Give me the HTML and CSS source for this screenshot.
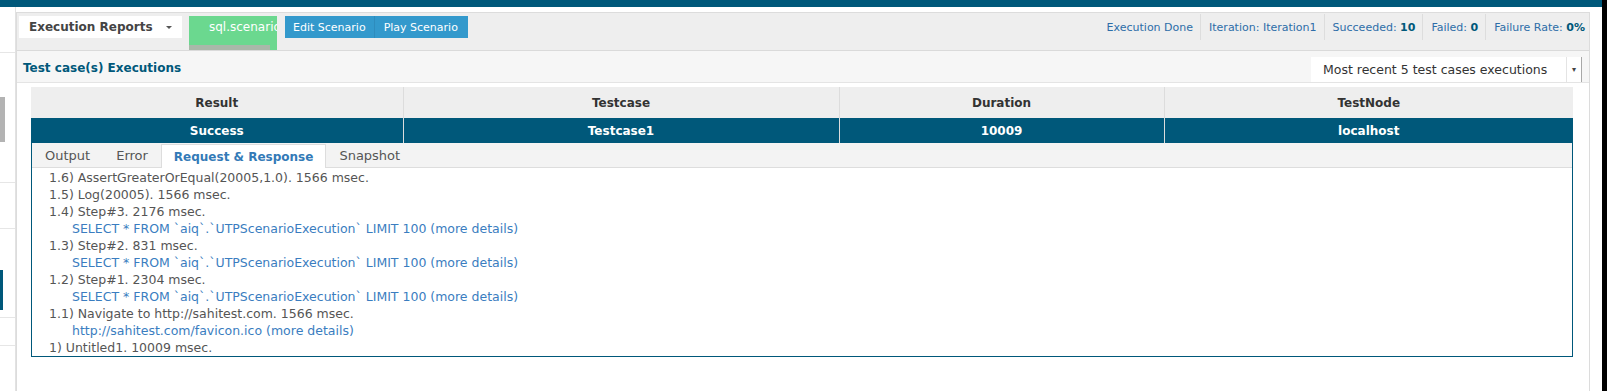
FILE: index.html
```html
<!DOCTYPE html>
<html lang="en">
    <head>
        <meta charset="UTF-8">
        <meta name="viewport" content="width=device-width, initial-scale=1.0">
        <title>Execution Reports</title>
        <link rel="stylesheet" href="styles.css">
    </head>
    <body>
        <div class="page">
            <div class="topbar"></div>
            <div class="layout">
                <aside class="sidebar">
                    <div class="side-item first"></div>
                    <div class="side-item tall"><div class="thumb"></div></div>
                    <div class="side-item mid"></div>
                    <div class="side-item active"><div class="marker"></div></div>
                    <div class="side-item small"></div>
                    <div class="side-item"></div>
                </aside>

                <main class="panel">
                    <div class="panel-head">
                        <div class="report-select">
                            <span>Execution Reports</span>
                            <span class="caret"></span>
                        </div>
                        <div class="scenario-tab">
                            <span class="scenario-name">sql.scenario</span>
                            <div class="scenario-bar"></div>
                        </div>
                        <div class="btn-group">
                            <button>Edit Scenario</button>
                            <button>Play Scenario</button>
                        </div>
                        <ul class="status">
                            <li>Execution Done</li>
                            <li>Iteration: Iteration1</li>
                            <li>Succeeded: <b>10</b></li>
                            <li>Failed: <b>0</b></li>
                            <li>Failure Rate: <b>0%</b></li>
                        </ul>
                    </div>

                    <div class="panel-sub">
                        <h2>Test case(s) Executions</h2>
                        <div class="recent-select">
                            <span>Most recent 5 test cases executions</span>
                            <span class="arrow">&#9662;</span>
                        </div>
                    </div>

                    <div class="panel-body">
                        <table class="runs">
                            <colgroup>
                                <col style="width: 372px">
                                <col style="width: 436px">
                                <col style="width: 325px">
                                <col style="width: 409px">
                            </colgroup>
                            <thead>
                                <tr>
                                    <th>Result</th>
                                    <th>Testcase</th>
                                    <th>Duration</th>
                                    <th>TestNode</th>
                                </tr>
                            </thead>
                            <tbody>
                                <tr class="selected">
                                    <td>Success</td>
                                    <td>Testcase1</td>
                                    <td>10009</td>
                                    <td>localhost</td>
                                </tr>
                            </tbody>
                        </table>

                        <div class="details">
                            <div class="tabs">
                                <span class="tab">Output</span>
                                <span class="tab">Error</span>
                                <span class="tab active">Request &amp; Response</span>
                                <span class="tab">Snapshot</span>
                            </div>
                            <div class="log">
                                <div>1.6) AssertGreaterOrEqual(20005,1.0). 1566 msec.</div>
                                <div>1.5) Log(20005). 1566 msec.</div>
                                <div>1.4) Step#3. 2176 msec.</div>
                                <div class="sub"><a href="#">SELECT * FROM `aiq`.`UTPScenarioExecution` LIMIT 100 (more details)</a></div>
                                <div>1.3) Step#2. 831 msec.</div>
                                <div class="sub"><a href="#">SELECT * FROM `aiq`.`UTPScenarioExecution` LIMIT 100 (more details)</a></div>
                                <div>1.2) Step#1. 2304 msec.</div>
                                <div class="sub"><a href="#">SELECT * FROM `aiq`.`UTPScenarioExecution` LIMIT 100 (more details)</a></div>
                                <div>1.1) Navigate to http://sahitest.com. 1566 msec.</div>
                                <div class="sub"><a href="#">http://sahitest.com/favicon.ico (more details)</a></div>
                                <div>1) Untitled1. 10009 msec.</div>
                            </div>
                        </div>
                    </div>
                </main>
            </div>
        </div>
        <div class="edge"></div>
    </body>
</html>
```

FILE: styles.css
```css
* {
    box-sizing: border-box;
    font-family: "DejaVu Sans", sans-serif;
}

body {
    margin: 0;
    height: 391px;
    overflow: hidden;
    display: flex;
    background: white;
}

.page {
    flex: 1;
    display: flex;
    flex-direction: column;
}
.edge {
    width: 5px;
    background: black;
}

.topbar {
    height: 7px;
    background: #00587a;
}

.layout {
    flex: 1;
    display: flex;
    padding-right: 12px;
}

/* left rail */
.sidebar {
    width: 16px;
    border-right: 1px solid #e2e2e2;
}
.side-item {
    border-bottom: 1px solid #e6e6e6;
}
.side-item.first { height: 46px; }
.side-item.tall { height: 130px; padding-top: 44px; }
.side-item.mid { height: 46px; }
.side-item.active { height: 89px; padding-top: 41px; }
.side-item.small { height: 28px; }
.side-item:last-child { border-bottom: none; }
.thumb {
    width: 5px;
    height: 45px;
    background: #b3b3b3;
}
.marker {
    width: 3px;
    height: 40px;
    background: #00587a;
}

/* panel */
.panel {
    flex: 1;
    margin-top: 5px;
    border: 1px solid #dcdcdc;
    border-bottom: none;
}

.panel-head {
    height: 38px;
    display: flex;
    align-items: flex-start;
    padding: 3px 0 0 2px;
    background: #eeeeee;
    border-bottom: 1px solid #dadada;
}

.report-select {
    width: 163px;
    height: 22px;
    padding: 0 10px;
    display: flex;
    align-items: center;
    justify-content: space-between;
    background: white;
    font-size: 12px;
    font-weight: bold;
    color: #444;
}
.caret {
    border-left: 3px solid transparent;
    border-right: 3px solid transparent;
    border-top: 3px solid #555;
}

.scenario-tab {
    width: 88px;
    height: 34px;
    margin-left: 7px;
    display: flex;
    flex-direction: column;
    background: #6bd88f;
    overflow: hidden;
}
.scenario-name {
    padding: 4px 0 0 20px;
    color: white;
    font-size: 12px;
    white-space: nowrap;
}
.scenario-bar {
    margin-top: auto;
    width: 81px;
    height: 5px;
    background: #a9b8a9;
}

.btn-group {
    display: flex;
    margin-left: 8px;
}
.btn-group button {
    height: 22px;
    padding: 0 8px;
    border: none;
    background: #3399cc;
    color: white;
    font-size: 11px;
}
.btn-group button + button {
    border-left: 1px solid #2e8cbd;
    padding: 0 10px 0 9px;
}

.status {
    display: flex;
    margin: -2px 4px 0 auto;
    padding: 0;
    list-style: none;
}
.status li {
    height: 26px;
    display: flex;
    align-items: center;
    padding: 0 7px 0 8px;
    border-left: 1px solid #dddddd;
    color: #2d6da8;
    font-size: 11px;
    white-space: pre;
}
.status li:first-child {
    border-left: none;
}
.status li:last-child {
    padding-right: 0;
}
.status b {
    color: #00587a;
}

.panel-sub {
    height: 32px;
    display: flex;
    align-items: flex-end;
    justify-content: space-between;
    padding: 0 7px 0 6px;
    background: #f6f6f6;
    border-bottom: 1px solid #e4e4e4;
}
.panel-sub h2 {
    align-self: center;
    margin: 3px 0 0;
    font-size: 12px;
    color: #00587a;
}
.recent-select {
    width: 271px;
    height: 25px;
    display: flex;
    align-items: center;
    background: white;
    border-right: 1px solid #a8a8a8;
    font-size: 12.5px;
    color: #333;
}
.recent-select span:first-child {
    flex: 1;
    padding-left: 12px;
}
.recent-select .arrow {
    width: 15px;
    height: 100%;
    display: flex;
    align-items: center;
    justify-content: center;
    border-left: 1px solid #e4e4e4;
    font-size: 8px;
    color: #444;
}

.panel-body {
    padding: 4px 16px 0 14px;
}

.runs {
    width: 1542px;
    border-collapse: collapse;
    table-layout: fixed;
}
.runs th {
    height: 31px;
    background: #eeeeee;
    border-left: 1px solid #dcdcdc;
    color: #333;
    font-size: 12px;
}
.runs td {
    height: 25px;
    border-left: 1px solid #dcdcdc;
    text-align: center;
    font-size: 12px;
    font-weight: bold;
}
.runs th:first-child,
.runs td:first-child {
    border-left: none;
}
.runs tr.selected {
    background: #00587a;
    color: white;
}

.details {
    width: 1542px;
    border: 1px solid #00587a;
    border-top: none;
}

.tabs {
    height: 25px;
    display: flex;
    align-items: flex-end;
    background: #f3f3f3;
    border-bottom: 1px solid #dddddd;
}
.tab {
    height: 23px;
    display: flex;
    align-items: center;
    padding: 0 13px;
    font-size: 13px;
    color: #555;
}
.tab.active {
    margin-bottom: -1px;
    height: 24px;
    padding: 0 12px;
    background: white;
    border: 1px solid #dddddd;
    border-bottom: none;
    font-size: 12px;
    font-weight: bold;
    color: #337ab7;
}

.log {
    padding: 1px 0 0 17px;
    font-size: 12.5px;
    line-height: 17px;
    color: #555;
}
.log .sub {
    padding-left: 23px;
}
.log a {
    color: #3a7dc0;
    text-decoration: none;
}
```
